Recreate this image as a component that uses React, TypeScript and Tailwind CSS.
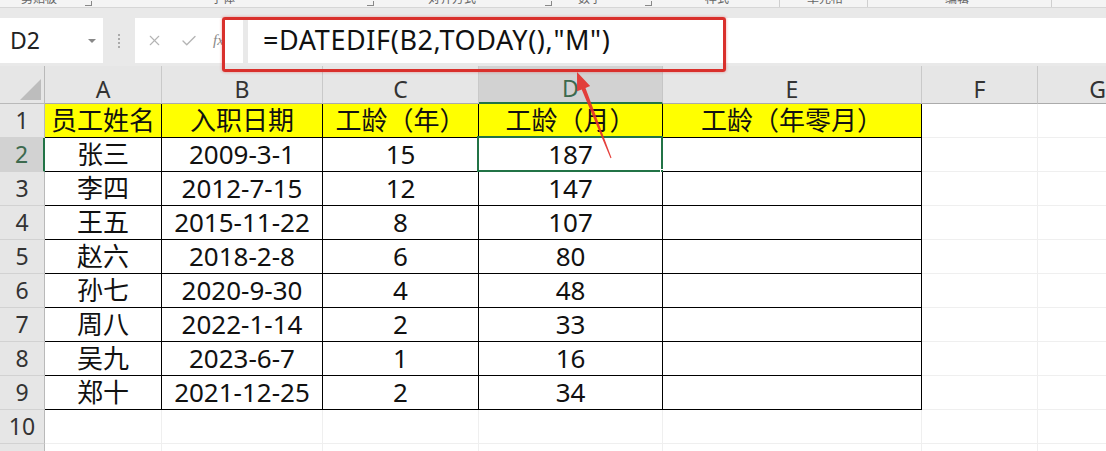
import { X, Check } from 'lucide-react';

const cols = [
  { name: 'A', w: 'w-[117px]' },
  { name: 'B', w: 'w-[161px]' },
  { name: 'C', w: 'w-[156px]' },
  { name: 'D', w: 'w-[184px]' },
  { name: 'E', w: 'w-[259px]' },
  { name: 'F', w: 'w-[116px]' },
  { name: 'G', w: 'w-[120px]' },
];

const data: string[][] = [
  ['员工姓名', '入职日期', '工龄（年）', '工龄（月）', '工龄（年零月）'],
  ['张三', '2009-3-1', '15', '187', ''],
  ['李四', '2012-7-15', '12', '147', ''],
  ['王五', '2015-11-22', '8', '107', ''],
  ['赵六', '2018-2-8', '6', '80', ''],
  ['孙七', '2020-9-30', '4', '48', ''],
  ['周八', '2022-1-14', '2', '33', ''],
  ['吴九', '2023-6-7', '1', '16', ''],
  ['郑十', '2021-12-25', '2', '34', ''],
];

const ribbon = [
  { label: '剪贴板', w: 'w-[64px]' },
  { icon: true, w: 'w-[126px]' },
  { label: '字体', w: 'w-[156px]' },
  { icon: true, w: 'w-[61px]' },
  { label: '对齐方式', w: 'w-[117px]' },
  { icon: true, w: 'w-[33px]' },
  { label: '数字', w: 'w-[67px]' },
  { icon: true, w: 'w-[60px]' },
  { label: '样式', w: 'w-[74px]' },
  { sep: true, w: 'w-[28px]' },
  { label: '单元格', w: 'w-[60px]' },
  { sep: true, w: 'w-[78px]' },
  { label: '编辑', w: 'w-[106px]' },
  { sep: true, w: 'w-[40px]' },
];

function RibbonStrip() {
  return (
    <div className="flex h-[8px] items-end overflow-hidden border-b border-[#d6d6d6] bg-[#f4f4f4] pl-[21px] text-[12px] leading-none text-[#666]">
      {ribbon.map((r, i) => (
        <div key={i} className={`${r.w} flex h-full shrink-0 items-end`}>
          {r.label && <span className="mb-[2px] whitespace-nowrap">{r.label}</span>}
          {r.icon && <span className="mb-[1px] h-[5px] w-[7px] border-r border-b border-[#888]" />}
          {r.sep && <span className="h-full w-px bg-[#cfcfcf]" />}
        </div>
      ))}
    </div>
  );
}

function FormulaBar() {
  return (
    <div className="flex h-[58px] items-start bg-[#e9e9e9] pt-[10px]">
      <div className="flex h-[45px] w-[103px] shrink-0 items-center justify-between bg-white pl-[10px] pr-[7px]">
        <span className="text-[23px] text-[#222]">D2</span>
        <span className="h-0 w-0 border-x-[4px] border-t-[4px] border-x-transparent border-t-[#888]" />
      </div>
      <div className="flex h-[45px] w-[32px] shrink-0 flex-col items-center justify-center gap-[2px]">
        <span className="h-[2px] w-[2px] bg-[#aaa]" />
        <span className="h-[2px] w-[2px] bg-[#aaa]" />
        <span className="h-[2px] w-[2px] bg-[#aaa]" />
        <span className="h-[2px] w-[2px] bg-[#aaa]" />
      </div>
      <div className="flex h-[45px] w-[108px] shrink-0 items-center bg-white pl-[11px] text-[#b4b4b4]">
        <X size={17} strokeWidth={1.6} />
        <Check size={18} strokeWidth={1.8} className="ml-[17px]" />
        <span className="ml-[15px] font-['Liberation_Serif',serif] text-[15px] italic text-[#888]">fx</span>
      </div>
      <div className="ml-[5px] flex h-[45px] flex-1 items-center bg-white pl-[15px]">
        <span className="text-[27px] tracking-[0.6px] text-[#111]">=DATEDIF(B2,TODAY(),"M")</span>
      </div>
    </div>
  );
}

function ColumnHeader() {
  return (
    <div className="flex h-[38px]">
      <div className="relative w-[45px] shrink-0 border-r border-b border-[#b9b9b9] bg-[#e6e6e6]">
        <svg className="absolute left-[20px] top-[13px]" width="21" height="21" viewBox="0 0 21 21">
          <polygon points="21,0 21,21 0,21" fill="#bdbdbd" />
        </svg>
      </div>
      {cols.map((c) => {
        const sel = c.name === 'D';
        return (
          <div
            key={c.name}
            className={`${c.w} flex shrink-0 items-end justify-center border-r pb-[2px] text-[23px] leading-none ${
              sel
                ? 'border-b-2 border-r-[#c6c6c6] border-b-[#217346] bg-[#d2d2d2] text-[#3d6a4e]'
                : 'border-b border-r-[#c9c9c9] border-b-[#ababab] bg-[#e6e6e6] text-[#333]'
            }`}
          >
            {c.name}
          </div>
        );
      })}
    </div>
  );
}

function Row({ n }: { n: number }) {
  const values = data[n - 1];
  const rowSel = n === 2;
  return (
    <div className="flex h-[34px]">
      <div
        className={`flex w-[45px] shrink-0 items-center justify-center border-b border-b-[#d2d2d2] text-[23px] ${
          rowSel ? 'border-r-2 border-r-[#217346] bg-[#d2d2d2] text-[#3d6a4e]' : 'border-r border-r-[#b9b9b9] bg-[#e6e6e6] text-[#333]'
        }`}
      >
        {n}
      </div>
      {cols.map((c, ci) => {
        const inTable = n <= 9 && ci <= 4;
        const text = values && ci <= 4 ? values[ci] : '';
        const selected = n === 2 && c.name === 'D';
        return (
          <div
            key={c.name}
            className={`${c.w} relative flex shrink-0 items-center justify-center border-r border-b text-[26px] text-[#111] ${
              inTable ? 'border-black' : 'border-[#efefef]'
            } ${n === 1 && ci <= 4 ? 'bg-[#ffff00]' : 'bg-white'}`}
          >
            {text}
            {selected && (
              <>
                <span className="absolute -left-[2px] -top-[2px] -right-px -bottom-px border-2 border-[#217346]" />
                <span className="absolute -bottom-[4px] -right-[4px] h-[6px] w-[6px] border border-white bg-[#217346]" />
              </>
            )}
          </div>
        );
      })}
    </div>
  );
}

export default function App() {
  return (
    <div className="relative h-[451px] w-[1106px] overflow-hidden bg-white font-['Noto_Sans','Noto_Sans_CJK_SC',sans-serif]">
      <RibbonStrip />
      <FormulaBar />
      <ColumnHeader />
      {[1, 2, 3, 4, 5, 6, 7, 8, 9, 10, 11].map((n) => (
        <Row key={n} n={n} />
      ))}

      {/* annotation: red box around the formula and the arrow */}
      <div className="pointer-events-none absolute left-[222px] top-[17px] h-[55px] w-[504px] rounded-[3px] border-[3px] border-[#d9302c] shadow-[0_0_3px_rgba(220,40,40,0.45)]" />
      <svg className="pointer-events-none absolute left-0 top-0" width="1106" height="451">
        <polygon
          points="577,72 590.1,86.1 585.5,88 611.5,157.8 610.5,158.2 581.7,89.4 577.1,91.3"
          fill="#e3312c"
          fillOpacity="0.92"
        />
      </svg>
    </div>
  );
}
